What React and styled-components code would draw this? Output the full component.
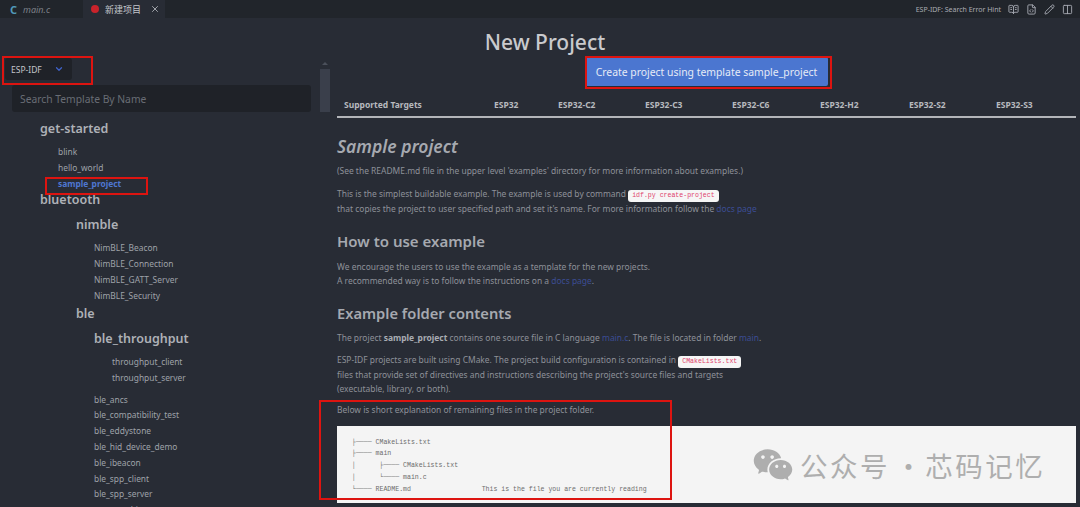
import styled, { createGlobalStyle } from "styled-components";
import { BookOpenText, ChevronDown, Columns2, FileCode, Pencil, X } from "lucide-react";
import { RiWechatFill } from "react-icons/ri";

const GlobalStyle = createGlobalStyle`
  html, body {
    margin: 0;
    height: 100%;
    background: #282c35;
    overflow: hidden;
  }
  * {
    box-sizing: border-box;
  }
`;

const Page = styled.div`
  position: relative;
  width: 1080px;
  height: 507px;
  overflow: hidden;
  background: #282c35;
  color: #a9acb3;
  font-family: "Noto Sans", "Open Sans", sans-serif;
`;

const TabBar = styled.div`
  display: flex;
  align-items: stretch;
  height: 18px;
  background: #21252b;
`;

const Tab = styled.div`
  display: flex;
  align-items: center;
  gap: 6px;
  width: ${(p) => p.$width}px;
  padding-left: ${(p) => p.$pad}px;
  background: ${(p) => (p.$active ? "#282c35" : "#21252b")};
  font-size: 9px;
  font-style: ${(p) => (p.$active ? "normal" : "italic")};
  color: ${(p) => (p.$active ? "#c4c6cb" : "#7d8189")};
`;

const TabIcon = styled.span`
  color: #519aba;
  font-size: 11px;
  font-weight: 700;
  font-style: normal;
`;

const RedDot = styled.span`
  width: 8px;
  height: 8px;
  border-radius: 50%;
  background: #c9232b;
`;

const TabLabel = styled.span`
  font-family: "Noto Sans CJK SC", "Noto Sans", sans-serif;
  flex: ${(p) => (p.$grow ? 1 : "none")};
`;

const TabClose = styled(X)`
  margin-right: 5px;
  color: #b9bcc2;
`;

const Actions = styled.div`
  display: flex;
  align-items: center;
  gap: 7px;
  margin-left: auto;
  padding-right: 7px;
  color: #a6aab2;
`;

const HintLabel = styled.span`
  font-size: 7px;
  color: #a9acb3;
`;

const Title = styled.h1`
  margin: 0;
  padding: 9px 0 0 10px;
  height: 37px;
  text-align: center;
  font-size: 21px;
  line-height: 30px;
  font-weight: 500;
  color: #c9cacd;
`;

const Body = styled.div`
  display: grid;
  grid-template-columns: 337px 1fr;
`;

const Sidebar = styled.aside`
  display: flex;
  height: 452px;
  overflow: hidden;
`;

const SideColumn = styled.div`
  width: 320px;
  flex: none;
  padding-top: 3px;
`;

const Select = styled.div`
  display: flex;
  align-items: center;
  justify-content: space-between;
  width: 67px;
  height: 22px;
  margin-left: 5px;
  padding: 0 8px 0 6px;
  border-radius: 3px;
  background: #1f2228;
  font-size: 8.5px;
  color: #c3c5ca;
`;

const SelectChevron = styled(ChevronDown)`
  color: #3f62c9;
`;

const Search = styled.input`
  display: block;
  width: 299px;
  height: 27px;
  margin: 5px 0 7.5px 12px;
  padding: 0 8px;
  border: none;
  border-radius: 3px;
  background: #1f2228;
  font-family: inherit;
  font-size: 10.3px;
  &::placeholder {
    color: #696d75;
  }
`;

const Group = styled.div`
  padding-left: ${(p) => p.$indent || 18}px;
  margin-bottom: ${(p) => p.$after || 0}px;
`;

const Tree = styled.div`
  padding-left: 22px;
`;

const GroupTitle = styled.div`
  font-size: 12.5px;
  line-height: 18px;
  font-weight: 600;
  margin-bottom: 6.5px;
  color: #aeb1b7;
`;

const Item = styled.div`
  font-size: 8.4px;
  line-height: 15.8px;
  font-weight: ${(p) => (p.$selected ? 700 : 400)};
  color: ${(p) => (p.$selected ? "#4f77d1" : "#9fa2a9")};
`;

const Scrollbar = styled.div`
  width: 10px;
  flex: none;
  padding-top: 7px;
`;

const ScrollArrow = styled.div`
  width: 0;
  height: 0;
  margin: 0 auto 4px;
  border-left: 3px solid transparent;
  border-right: 3px solid transparent;
  border-bottom: 3px solid #4b505b;
`;

const ScrollThumb = styled.div`
  height: 43px;
  background: #3a3f4b;
`;

const Main = styled.main`
  width: 739px;
  padding-top: 2px;
`;

const CreateButton = styled.button`
  display: block;
  width: 243px;
  height: 29px;
  margin: 0 auto;
  border: none;
  border-radius: 2px;
  background: #4b76d0;
  color: #e6ebf6;
  font-family: inherit;
  font-size: 10.4px;
`;

const Targets = styled.div`
  display: grid;
  grid-template-columns: 150px 64px 87px 87px 88px 89px 87px 1fr;
  align-items: center;
  height: 32px;
  padding: 7px 0 0 7px;
  border-bottom: 2px solid #b3b5b9;
  font-size: 8.5px;
  font-weight: 700;
  color: #b7b9be;
`;

const Heading = styled.h2`
  margin: ${(p) => p.$top}px 0 ${(p) => p.$bottom}px;
  font-size: ${(p) => p.$size}px;
  line-height: 24px;
  font-weight: 600;
  font-style: ${(p) => (p.$italic ? "italic" : "normal")};
  color: #a6a9b0;
`;

const Text = styled.p`
  margin: 0 0 ${(p) => p.$bottom}px;
  font-size: 8.45px;
  line-height: 14px;
  color: #8e9199;
  white-space: nowrap;
`;

const Link = styled.a`
  color: #3c4d94;
`;

const Strong = styled.strong`
  color: #a9acb3;
`;

const Code = styled.code`
  display: inline-block;
  margin: 0 2px 0 0;
  padding: 0 4px;
  line-height: 12px;
  border-radius: 3px;
  background: #f6f6f6;
  color: #e0436c;
  font-family: "Liberation Mono", monospace;
  font-size: 6.55px;
`;

const CodeBlock = styled.pre`
  margin: 9px 0 0;
  height: 77px;
  padding: 10.5px 15px 0;
  background: #f4f4f4;
  color: #6c6c6c;
  font-family: "Liberation Mono", monospace;
  font-size: 6.55px;
  line-height: 11.8px;
`;

const Marker = styled.div`
  position: absolute;
  left: ${(p) => p.$x}px;
  top: ${(p) => p.$y}px;
  width: ${(p) => p.$w}px;
  height: ${(p) => p.$h}px;
  border: 2px solid #dd1410;
  pointer-events: none;
`;

const Watermark = styled.div`
  position: absolute;
  left: 752px;
  top: 444px;
  display: flex;
  align-items: center;
  gap: 6px;
  font-family: "Noto Sans CJK SC", sans-serif;
  font-size: 27.5px;
  line-height: 36px;
  letter-spacing: 2.5px;
  color: #aeaeae;
`;

const WatermarkDot = styled.span`
  letter-spacing: -1.5px;
  white-space: pre;
`;

const tree = [
  { name: "get-started", items: ["blink", "hello_world", "sample_project"] },
  {
    name: "bluetooth",
    children: [
      {
        name: "nimble",
        indent: 36,
        after: 1.5,
        items: ["NimBLE_Beacon", "NimBLE_Connection", "NimBLE_GATT_Server", "NimBLE_Security"],
      },
      {
        name: "ble",
        indent: 36,
        children: [{ name: "ble_throughput", items: ["throughput_client", "throughput_server"], after: 6 }],
        items: [
          "ble_ancs",
          "ble_compatibility_test",
          "ble_eddystone",
          "ble_hid_device_demo",
          "ble_ibeacon",
          "ble_spp_client",
          "ble_spp_server",
          "gattc_multi_connect",
        ],
      },
    ],
  },
];

const targets = ["Supported Targets", "ESP32", "ESP32-C2", "ESP32-C3", "ESP32-C6", "ESP32-H2", "ESP32-S2", "ESP32-S3"];

const TreeNode = ({ node }) => (
  <Group $indent={node.indent} $after={node.after}>
    <GroupTitle>{node.name}</GroupTitle>
    {node.children && node.children.map((child) => <TreeNode key={child.name} node={child} />)}
    {node.items &&
      node.items.map((item) => (
        <Group key={item}>
          <Item $selected={item === "sample_project"}>{item}</Item>
        </Group>
      ))}
  </Group>
);

const App = () => (
  <Page>
    <GlobalStyle />
    <TabBar>
      <Tab $width={83} $pad={10}>
        <TabIcon>C</TabIcon>
        main.c
      </Tab>
      <Tab $width={82} $pad={8} $active>
        <RedDot />
        <TabLabel $grow>新建项目</TabLabel>
        <TabClose size={10} strokeWidth={2} />
      </Tab>
      <Actions>
        <HintLabel>ESP-IDF: Search Error Hint</HintLabel>
        <BookOpenText size={11} />
        <FileCode size={11} />
        <Pencil size={11} />
        <Columns2 size={11} />
      </Actions>
    </TabBar>
    <Title>New Project</Title>
    <Body>
      <Sidebar>
        <SideColumn>
          <Select>
            ESP-IDF
            <SelectChevron size={10} strokeWidth={3} />
          </Select>
          <Search placeholder="Search Template By Name" />
          <Tree>
            {tree.map((node) => (
              <TreeNode key={node.name} node={node} />
            ))}
          </Tree>
        </SideColumn>
        <Scrollbar>
          <ScrollArrow />
          <ScrollThumb />
        </Scrollbar>
      </Sidebar>
      <Main>
        <CreateButton>Create project using template sample_project</CreateButton>
        <Targets>
          {targets.map((name) => (
            <span key={name}>{name}</span>
          ))}
        </Targets>
        <Heading $size={17.5} $italic $top={16} $bottom={6}>
          Sample project
        </Heading>
        <Text $bottom={9}>(See the README.md file in the upper level 'examples' directory for more information about examples.)</Text>
        <Text $bottom={0}>
          This is the simplest buildable example. The example is used by command <Code>idf.py create-project</Code>
        </Text>
        <Text $bottom={0}>
          that copies the project to user specified path and set it's name. For more information follow the <Link>docs page</Link>
        </Text>
        <Heading $size={15} $top={13} $bottom={7}>
          How to use example
        </Heading>
        <Text $bottom={0}>We encourage the users to use the example as a template for the new projects.</Text>
        <Text $bottom={0}>
          A recommended way is to follow the instructions on a <Link>docs page</Link>.
        </Text>
        <Heading $size={14.7} $top={13} $bottom={6}>
          Example folder contents
        </Heading>
        <Text $bottom={8}>
          The project <Strong>sample_project</Strong> contains one source file in C language <Link>main.c</Link>. The file is located in folder{" "}
          <Link>main</Link>.
        </Text>
        <Text $bottom={0}>
          ESP-IDF projects are built using CMake. The project build configuration is contained in <Code>CMakeLists.txt</Code>
        </Text>
        <Text $bottom={0}>files that provide set of directives and instructions describing the project's source files and targets</Text>
        <Text $bottom={7}>(executable, library, or both).</Text>
        <Text $bottom={0}>Below is short explanation of remaining files in the project folder.</Text>
        <CodeBlock>{`├──── CMakeLists.txt
├──── main
│      ├──── CMakeLists.txt
│      └──── main.c
└──── README.md                  This is the file you are currently reading`}</CodeBlock>
      </Main>
    </Body>
    <Marker $x={2} $y={56} $w={91} $h={29} />
    <Marker $x={45} $y={177} $w={103} $h={18} />
    <Marker $x={585} $y={56} $w={247} $h={33} />
    <Marker $x={319} $y={400} $w={353} $h={100} />
    <Watermark>
      <RiWechatFill size={42} />
      <span>
        公众号<WatermarkDot> · </WatermarkDot>芯码记忆
      </span>
    </Watermark>
  </Page>
);

export default App;
